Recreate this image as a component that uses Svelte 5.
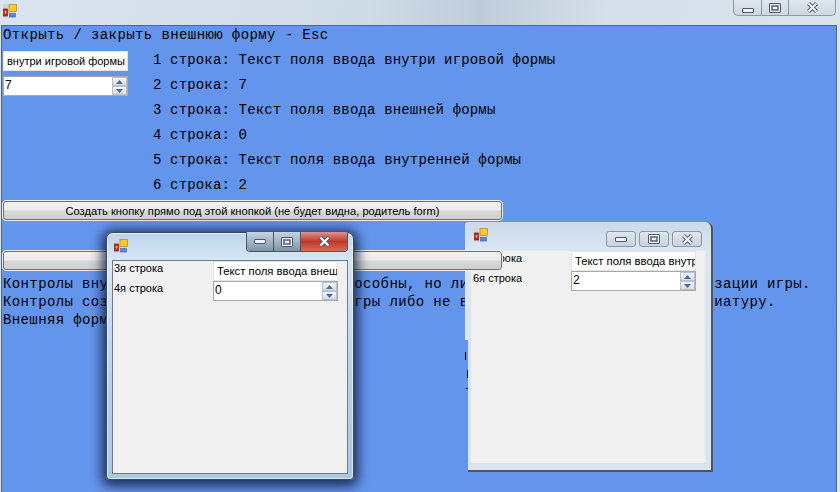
<script>
	const lines = [
		'1 строка: Текст поля ввода внутри игровой формы',
		'2 строка: 7',
		'3 строка: Текст поля ввода внешней формы',
		'4 строка: 0',
		'5 строка: Текст поля ввода внутренней формы',
		'6 строка: 2'
	];

	const notes = [
		'Контролы внутри игровой формы - работоспособны, но лишают игру возможности оптимизации игры.',
		'Контролы созданные снаружи самого окна игры либо не видны, либо не принимают клавиатуру.',
		'Внешняя форма работает всегда.'
	];
</script>

{#snippet appIcon()}
	<svg class="app-icon" width="14" height="14" viewBox="0 0 14 14">
		<rect x="0" y="0" width="13" height="14" fill="#d2d4d8" />
		<rect x="6" y="0.5" width="7.500" height="7" fill="#f6c92c" stroke="#b5851a" stroke-width="0.7" />
		<rect x="0.5" y="5" width="4" height="7" fill="#c8281e" stroke="#7d1712" stroke-width="0.7" />
		<rect x="1.700" y="7" width="1.600" height="2.400" fill="#f4b8a8" />
		<rect x="6.500" y="9.500" width="6" height="3.500" fill="#4c8ae0" stroke="#2d5ca8" stroke-width="0.5" />
	</svg>
{/snippet}

{#snippet iconMin()}
	<svg class="ico" width="12" height="5" viewBox="0 0 12 5">
		<rect x="0.500" y="0.500" width="11" height="4" rx="0.500" fill="#eef2f6" stroke="#4e5a68" />
	</svg>
{/snippet}

{#snippet iconMax()}
	<svg class="ico" width="12" height="10" viewBox="0 0 12 10">
		<rect x="0.500" y="0.500" width="11" height="9" rx="0.500" fill="#eef2f6" stroke="#4e5a68" />
		<rect x="3" y="3" width="6" height="4" fill="none" stroke="#4e5a68" stroke-width="1.400" />
	</svg>
{/snippet}

{#snippet iconClose(fill)}
	<svg class="ico" width="13" height="11" viewBox="0 0 13 11">
		<path d="M2.500 1.500 10.500 9.500M10.500 1.500 2.500 9.500" fill="none" stroke="#4e5a68" stroke-width="4" />
		<path d="M2.500 1.500 10.500 9.500M10.500 1.500 2.500 9.500" fill="none" stroke={fill} stroke-width="2.200" />
	</svg>
{/snippet}

{#snippet spinner(value)}
	<div class="spin">
		<span class="spin-value">{value}</span>
		<div class="spin-arrows">
			<div class="arrow"><svg width="7" height="4" viewBox="0 0 7 4"><path d="M3.500 0 7 4H0z" fill="#4d6a9c" /></svg></div>
			<div class="arrow"><svg width="7" height="4" viewBox="0 0 7 4"><path d="M0 0h7L3.500 4z" fill="#4d6a9c" /></svg></div>
		</div>
	</div>
{/snippet}

<div class="app">
	<header class="titlebar">
		{@render appIcon()}
		<div class="main-buttons">
			<div class="mb mb-min">{@render iconMin()}</div>
			<div class="mb">{@render iconMax()}</div>
			<div class="mb mb-close">{@render iconClose('#eef2f6')}</div>
		</div>
	</header>

	<main class="client">
		<div class="heading">Открыть / закрыть внешнюю форму - Esc</div>

		<div class="top">
			<div class="inputs">
				<div class="text-input">внутри игровой формы</div>
				{@render spinner(7)}
			</div>
			<div class="lines">
				{#each lines as line}
					<div>{line}</div>
				{/each}
			</div>
		</div>

		<button class="btn">Создать кнопку прямо под этой кнопкой (не будет видна, родитель form)</button>
		<button class="btn btn-second"></button>

		<div class="notes">
			{#each notes as note}
				<div>{note}</div>
			{/each}
		</div>
	</main>

	<!-- обрезанные буквы у края заднего окна -->
	<span class="tick tick-a"></span>
	<span class="tick tick-b"></span>
	<span class="tick tick-c"></span>

	<section class="window win-back">
		<div class="win-title">
			{@render appIcon()}
			<div class="win-buttons">
				<div class="wb">{@render iconMin()}</div>
				<div class="wb">{@render iconMax()}</div>
				<div class="wb">{@render iconClose('#eef2f6')}</div>
			</div>
		</div>
		<div class="win-body">
			<div class="form-row">
				<span class="form-label">5я строка</span>
				<div class="text-input in-form">Текст поля ввода внутр</div>
			</div>
			<div class="form-row">
				<span class="form-label">6я строка</span>
				<div class="form-spin">{@render spinner(2)}</div>
			</div>
		</div>
	</section>

	<section class="window win-front">
		<div class="win-title">
			{@render appIcon()}
			<div class="win-buttons active">
				<div class="wb">{@render iconMin()}</div>
				<div class="wb">{@render iconMax()}</div>
				<div class="wb wb-close">{@render iconClose('#ffffff')}</div>
			</div>
		</div>
		<div class="win-body">
			<div class="form-row">
				<span class="form-label">3я строка</span>
				<div class="text-input in-form">Текст поля ввода внеш</div>
			</div>
			<div class="form-row">
				<span class="form-label">4я строка</span>
				<div class="form-spin">{@render spinner(0)}</div>
			</div>
		</div>
	</section>
</div>

<style>
	:global(body) {
		margin: 0;
		overflow: hidden;
		background: #dfe7f0;
	}

	.app {
		position: relative;
		width: 840px;
		height: 492px;
		overflow: hidden;
		font-family: 'Liberation Sans', Arial, sans-serif;
		font-size: 11px;
		color: #000;
		background: linear-gradient(100deg, #dbe4ee 0%, #cfdbe7 40%, #bfccd9 52%, #d5dfe9 66%, #dde6ef 100%);
	}

	.titlebar {
		height: 25px;
		display: flex;
		justify-content: space-between;
		padding-left: 3px;
		box-sizing: border-box;
	}

	.app-icon {
		margin-top: 4px;
		flex: none;
	}

	.ico {
		display: block;
	}

	.main-buttons {
		display: flex;
		height: 15px;
		margin-right: 4px;
		border: 1px solid #8b97a5;
		border-top: none;
		border-radius: 0 0 5px 5px;
		background: linear-gradient(#dfe6ee, #cdd7e2);
	}

	.mb {
		display: flex;
		align-items: center;
		justify-content: center;
		box-sizing: border-box;
		width: 27px;
		border-right: 1px solid #8b97a5;
	}

	.mb-min {
		width: 28px;
	}

	.mb-min .ico {
		margin-top: 6px;
	}

	.mb-close {
		width: 46px;
		border-right: none;
	}

	.client {
		height: 467px;
		margin: 0 3px 0 1px;
		box-sizing: border-box;
		padding: 0 0 0 1px;
		background: #6495ed;
		border: 1px solid #5a6672;
		border-bottom: none;
		font-family: 'Liberation Mono', 'DejaVu Sans Mono', monospace;
		font-size: 14px;
		letter-spacing: 0.4px;
		line-height: 18px;
	}

	.heading {
		height: 25px;
		white-space: nowrap;
	}

	.top {
		display: flex;
		height: 150px;
	}

	.inputs {
		width: 150px;
		flex: none;
	}

	.lines {
		margin-top: -3px;
		letter-spacing: 0.16px;
		line-height: 25px;
		white-space: nowrap;
	}

	.text-input {
		box-sizing: border-box;
		width: 125px;
		height: 20px;
		padding-left: 3px;
		background: #fff;
		border: 1px solid #e4e4e4;
		font-family: 'Liberation Sans', Arial, sans-serif;
		font-size: 11px;
		letter-spacing: 0;
		line-height: 18px;
		white-space: nowrap;
		overflow: hidden;
	}

	.spin {
		box-sizing: border-box;
		width: 125px;
		height: 20px;
		margin-top: 5px;
		display: flex;
		justify-content: space-between;
		background: #fff;
		border: 1px solid #a9a9a9;
		font-family: 'Liberation Sans', Arial, sans-serif;
		font-size: 12px;
		letter-spacing: 0;
		line-height: 17px;
	}

	.spin-value {
		padding-left: 1px;
	}

	.spin-arrows {
		width: 15px;
		display: flex;
		flex-direction: column;
		justify-content: space-between;
	}

	.arrow {
		height: 9px;
		box-sizing: border-box;
		display: flex;
		align-items: center;
		justify-content: center;
		background: linear-gradient(#f4f6f8, #d4dbe3);
		border: 1px solid #b9c0c8;
	}

	.arrow svg {
		display: block;
	}

	.btn {
		display: block;
		box-sizing: border-box;
		width: 499px;
		height: 19px;
		padding: 0;
		border: 1px solid #6e6e6e;
		outline: 1px solid #f0f0f0;
		border-radius: 3px;
		background: linear-gradient(#f2f2f2 0%, #ebebeb 48%, #d8d8d8 52%, #cfcfcf 100%);
		font-family: 'Liberation Sans', Arial, sans-serif;
		font-size: 11.150px;
		letter-spacing: 0;
		color: #000;
	}

	.btn-second {
		position: relative;
		z-index: 2;
		margin-top: 31px;
		margin-bottom: 5px;
	}

	.notes {
		white-space: nowrap;
		line-height: 18px;
		letter-spacing: 0.38px;
	}

	.tick {
		position: absolute;
		background: #000;
	}

	.tick-a {
		left: 465px;
		top: 352px;
		width: 1px;
		height: 8px;
	}

	.tick-b {
		left: 467px;
		top: 370px;
		width: 1px;
		height: 8px;
	}

	.tick-c {
		left: 466px;
		top: 388px;
		width: 2px;
		height: 1px;
	}

	.window {
		position: absolute;
		box-sizing: border-box;
	}

	.win-back {
		z-index: 1;
		left: 468px;
		top: 222px;
		width: 245px;
		height: 250px;
		border-right: 2px solid #555;
		border-bottom: 2px solid #555;
		border-radius: 0 7px 0 0;
		background: linear-gradient(#cbdae9, #dbe6f2 29px, #d8e4f0);
	}

	.win-back::before {
		content: '';
		position: absolute;
		left: -3px;
		top: 0;
		width: 3px;
		height: 118px;
		border-radius: 7px 0 0 0;
		background: linear-gradient(#cbdae9, #dbe6f2 29px, #dde7f2);
	}

	.win-back .win-title {
		height: 29px;
		padding-left: 6px;
	}

	.win-back .win-body {
		margin: 0 6px 0 3px;
		height: 212px;
	}

	.win-front {
		z-index: 3;
		left: 106px;
		top: 232px;
		width: 248px;
		height: 248px;
		border: 1px solid #3f4a57;
		border-radius: 7px 7px 4px 4px;
		box-shadow: inset 0 0 0 1px rgba(255, 255, 255, 0.55), 0 2px 12px 4px rgba(10, 20, 50, 0.8);
		background: linear-gradient(#bcd4ea, #d9e7f4 28px, #b5d0e7 60%, #a9c8e2);
	}

	.win-title {
		height: 27px;
		display: flex;
		justify-content: space-between;
		padding-left: 7px;
	}

	.win-title .app-icon {
		margin-top: 6px;
	}

	.win-buttons {
		display: flex;
		gap: 3px;
		margin: 9px 9px 0 0;
		height: 16px;
	}

	.wb {
		box-sizing: border-box;
		display: flex;
		align-items: center;
		justify-content: center;
		width: 30px;
		border: 1px solid #8a97a6;
		border-radius: 3px;
		background: linear-gradient(#dfe6ee, #c8d3df);
	}

	.win-buttons.active {
		gap: 0;
		margin: -1px 5px 0 0;
		height: 19px;
		border: 1px solid #4a5562;
		border-top: none;
		border-radius: 0 0 4px 4px;
		overflow: hidden;
	}

	.win-buttons.active .wb {
		border: none;
		border-right: 1px solid #4a5562;
		border-radius: 0;
		width: 27px;
		background: linear-gradient(#c5d3e2, #a3b4c7 50%, #7f92a8);
	}

	.win-buttons.active .wb-close {
		width: 46px;
		border-right: none;
		background: linear-gradient(#e0928a, #c0392b 50%, #d66a55);
	}

	.win-body {
		box-sizing: border-box;
		margin: 0 5px;
		background: #f0f0f0;
		padding: 0 0 0 2px;
	}

	.win-front .win-body {
		height: 214px;
		border: 1px solid #6f7b88;
		padding-left: 1px;
	}

	.form-row {
		display: flex;
		justify-content: space-between;
		height: 20px;
		padding-right: 9px;
	}

	.form-label {
		line-height: 14px;
	}

	.text-input.in-form {
		width: 125px;
		height: 20px;
		font-size: 11.300px;
		padding-left: 3px;
	}

	.form-spin .spin {
		margin-top: 0;
	}
</style>
